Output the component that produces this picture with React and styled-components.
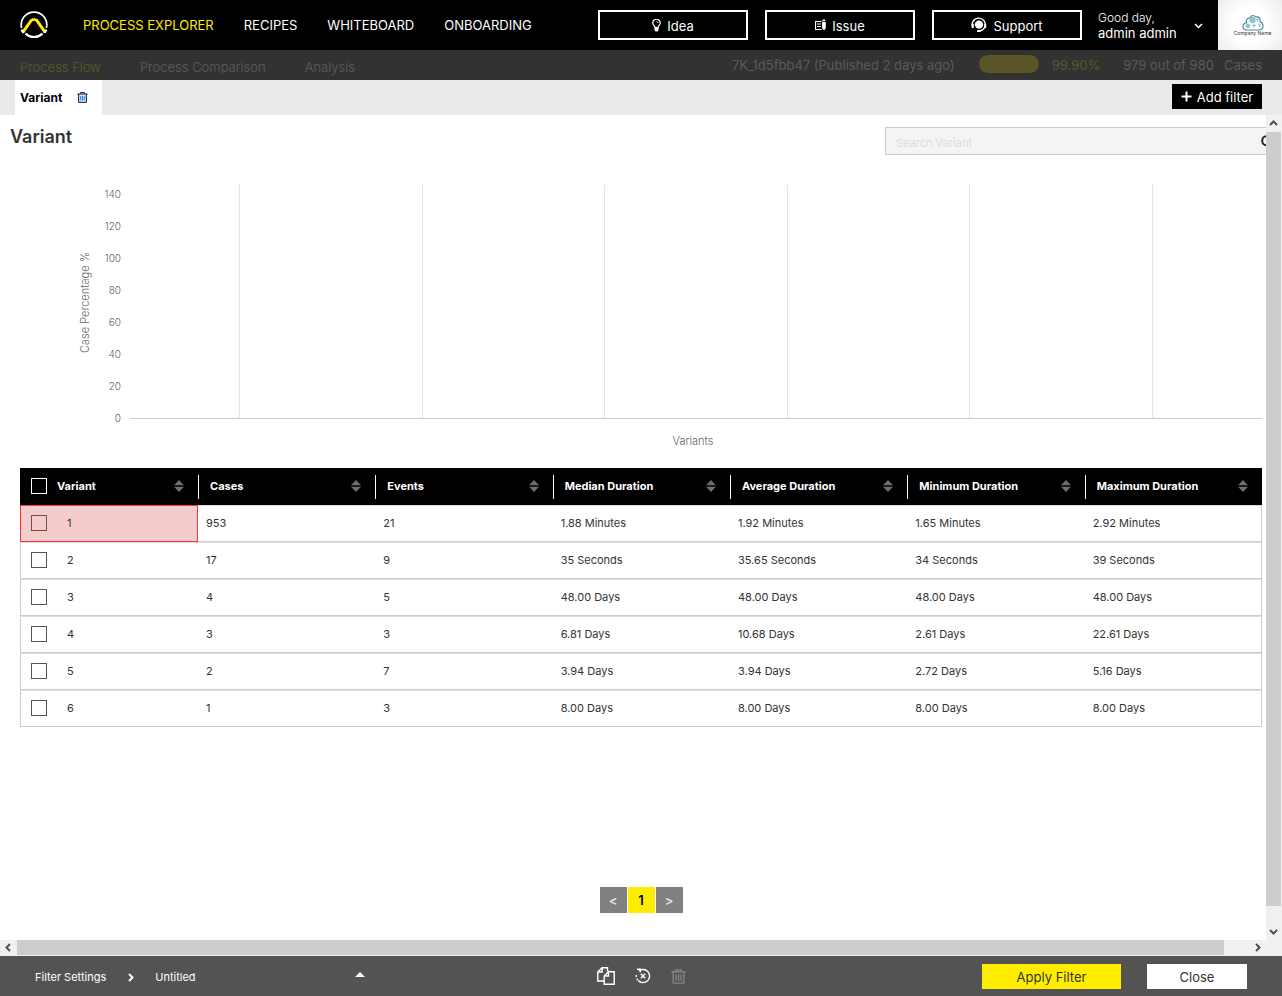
import React from "react";
import styled, { createGlobalStyle } from "styled-components";

const GlobalStyle = createGlobalStyle`
  *, *::before, *::after { box-sizing: border-box; }
  body { margin: 0; background: #fff; color: #333; font-family: Inter, "Liberation Sans", sans-serif; font-size: 12px; }
  button, input, select { font: inherit; color: inherit; margin: 0; padding: 0; border: 0; border-radius: 0; background: none; }
  button { cursor: pointer; }
  a { color: inherit; text-decoration: none; }
  svg { display: block; flex: none; }
`;

const Page = styled.div`
  display: flex;
  flex-direction: column;
  min-height: 100vh;
`;

/* Top bar */
const TopBar = styled.header`
  display: flex;
  align-items: center;
  height: 50px;
  padding-left: 19px;
  background: #000;
  color: #fff;
`;
const MainNav = styled.nav`
  display: flex;
  gap: 30px;
  margin-left: 34px;
  flex: 1;
  font-size: 13px;
  white-space: nowrap;
`;
const NavLink = styled.a`
  color: ${(p) => (p.$active ? "#ffed00" : "#fff")};
`;
const Actions = styled.div`
  display: flex;
  gap: 17px;
`;
const ActionButton = styled.button`
  display: flex;
  align-items: center;
  justify-content: center;
  gap: 6px;
  width: 150px;
  height: 30px;
  border: 2px solid #fff;
  font-size: 13px;
`;
const ActionText = styled.span`
  padding-top: 2px;
`;
const UserMenu = styled.button`
  display: flex;
  align-items: center;
  justify-content: space-between;
  width: 136px;
  padding: 0 15px 0 16px;
  text-align: left;
  font-size: 13px;
  line-height: 16px;
`;
const Greeting = styled.span`
  display: block;
  font-size: 12px;
  font-weight: 300;
  line-height: 15px;
`;
const Company = styled.div`
  display: flex;
  flex-direction: column;
  align-items: center;
  width: 64px;
  height: 50px;
  padding: 14px 0 0 5px;
  background: radial-gradient(circle, #fff 45%, #ececec 100%);
  color: #333;
  font-size: 5px;
  line-height: 5px;
  white-space: nowrap;
`;

/* Process bar, dimmed while the filter panel is open */
const SubBar = styled.div`
  display: flex;
  align-items: center;
  justify-content: space-between;
  height: 30px;
  padding: 0 20px;
  background: #323232;
  color: #5a5a5a;
  font-size: 13px;
  white-space: nowrap;
`;
const SubNav = styled.nav`
  display: flex;
  gap: 39px;
  padding-top: 4px;
  font-weight: 300;
`;
const SubLink = styled.a`
  color: ${(p) => (p.$active ? "#5f5a28" : "#5e5e5e")};
`;
const Status = styled.div`
  display: flex;
  align-items: center;
`;
const Meter = styled.div`
  width: 60px;
  height: 18px;
  margin: -2px 13px 0 24px;
  border-radius: 9px;
  background: #5b5628;
`;
const Percent = styled.span`
  margin-right: 23px;
  color: #5b5628;
`;
const CaseCount = styled.span`
  margin-right: 10px;
`;

/* Filter tabs */
const TabBar = styled.div`
  display: flex;
  justify-content: space-between;
  height: 35px;
  padding: 0 20px 0 15px;
  background: #eaeaec;
`;
const Tab = styled.div`
  display: flex;
  align-items: center;
  justify-content: space-between;
  width: 87px;
  padding: 0 14px 0 5px;
  background: #fff;
  color: #000;
  font-weight: 700;
`;
const IconButton = styled.button`
  display: grid;
  place-items: center;
`;
const AddFilter = styled.button`
  display: flex;
  align-items: center;
  justify-content: center;
  gap: 5px;
  width: 90px;
  height: 25px;
  margin-top: 4px;
  background: #000;
  color: #fff;
  font-size: 13px;
`;

/* Scrollable panel */
const Panel = styled.div`
  flex: 1;
  display: grid;
  grid-template-columns: minmax(0, 1fr) 16px;
  grid-template-rows: 1fr 16px;
  background: #f0f0f0;
`;
const Content = styled.main`
  display: flex;
  flex-direction: column;
  overflow: hidden;
  padding: 0 4px 27px 20px;
  background: #fff;
`;
const Heading = styled.div`
  display: flex;
  justify-content: space-between;
  margin: 0 -10px;
`;
const Title = styled.h1`
  margin: 11px 0 0;
  font-size: 18px;
  line-height: 22px;
  font-weight: 600;
`;
const SearchBox = styled.label`
  display: flex;
  align-items: center;
  width: 389px;
  height: 28px;
  margin: 12px -2px 0 0;
  padding: 0 0 0 10px;
  border: 1px solid #ccc;
  background: #f4f4f4;
`;
const SearchInput = styled.input`
  flex: 1;
  min-width: 0;
  padding-top: 3px;
  outline: 0;
  font-size: 11px;
  &::placeholder { color: #dcdcdc; opacity: 1; }
`;

const Chart = styled.section`
  display: grid;
  grid-template-columns: 24px 29px minmax(0, 1fr);
  margin: 30px 0 19px 57px;
  color: #666;
  font-size: 11px;
  font-weight: 300;
`;
const AxisTitle = styled.div`
  writing-mode: vertical-rl;
  transform: rotate(180deg);
  text-align: center;
  line-height: 16px;
  width: 16px;
`;
const Ticks = styled.div`
  display: flex;
  flex-direction: column;
  justify-content: space-between;
  text-align: right;
  font-size: 10px;
  line-height: 16px;
  padding: 1px 9px 0 0;
  margin-bottom: -6px;
`;
const Plot = styled.svg`
  width: 100%;
  height: 235px;
  overflow: visible;
`;
const XTitle = styled.div`
  grid-column: 3;
  padding: 13px 6px 0 0;
  text-align: center;
  line-height: 16px;
`;

/* Variants table */
const Table = styled.table`
  width: 100%;
  table-layout: fixed;
  border-collapse: separate;
  border-spacing: 0;
`;
const HeadCell = styled.th`
  height: 37px;
  padding: 0;
  background: #000;
  color: #fff;
  font-size: 11px;
  font-weight: 700;
  text-align: left;
  &:first-child { width: 178px; }
`;
const HeadInner = styled.div`
  display: flex;
  align-items: center;
  justify-content: space-between;
  height: 24px;
  padding: 0 14px 2px 11px;
  border-left: ${(p) => (p.$first ? "0" : "1px solid #fff")};
`;
const CheckLabel = styled.label`
  display: flex;
  align-items: center;
  gap: ${(p) => p.$gap}px;
`;
const Check = styled.input`
  appearance: none;
  width: 16px;
  height: 16px;
  border: 1px solid ${(p) => (p.$light ? "#fff" : "#555")};
  ${(p) => p.$marked && "border-color: #7d4a4a;"}
`;
const Cell = styled.td`
  height: 37px;
  padding: 0 0 1px 8px;
  border-top: 1px solid #ddd;
  border-bottom: 1px solid #ccc;
  font-size: 11px;
  &:first-child { padding-left: 10px; border-left: 1px solid #ccc; }
  &:last-child { border-right: 1px solid #ccc; }
  ${(p) => p.$marked && "background: #f4cccc; && { border: 1px solid #f33; }"}
`;

const Pager = styled.nav`
  display: flex;
  justify-content: center;
  gap: 1px;
  margin-top: auto;
  padding-top: 20px;
`;
const PageButton = styled.button`
  width: 27px;
  height: 26px;
  background: ${(p) => (p.$current ? "#ffed00" : "#808080")};
  color: ${(p) => (p.$current ? "#000" : "#e4e4e4")};
  font-size: 13px;
  font-weight: 600;
`;

const Track = styled.div`
  display: flex;
  flex-direction: ${(p) => (p.$vertical ? "column" : "row")};
  background: #f0f0f0;
`;
const ScrollArrow = styled.button`
  display: grid;
  place-items: center;
  flex: none;
  width: ${(p) => (p.$vertical ? 15 : 17)}px;
  height: ${(p) => (p.$vertical ? 17 : 15)}px;
`;
const Rail = styled.div`
  flex: 1;
  display: flex;
  flex-direction: inherit;
  padding: ${(p) => (p.$vertical ? "0 1px 0 0" : "0 0 1px")};
`;
const Thumb = styled.div`
  flex: 0 0 ${(p) => p.$size}%;
  background: #cdcdcd;
`;

/* Bottom bar */
const BottomBar = styled.footer`
  display: flex;
  align-items: center;
  height: 40px;
  padding: 0 35px;
  background: #535353;
  color: #fff;
`;
const Side = styled.div`
  flex: 1;
  display: flex;
  align-items: center;
  gap: ${(p) => (p.$end ? 26 : 20)}px;
  justify-content: ${(p) => (p.$end ? "flex-end" : "flex-start")};
  padding-top: ${(p) => (p.$end ? 1 : 2)}px;
`;
const FilterName = styled.label`
  display: flex;
  align-items: center;
  width: 210px;
`;
const FilterSelect = styled.select`
  flex: 1;
  appearance: none;
  outline: 0;
  font-size: 11px;
`;
const FooterLabel = styled.span`
  font-size: 11px;
`;
const Tools = styled.div`
  display: flex;
  align-items: center;
  gap: 20px;
`;
const FooterButton = styled.button`
  width: ${(p) => (p.$primary ? 139 : 100)}px;
  height: 25px;
  background: ${(p) => (p.$primary ? "#ffed00" : "#fff")};
  color: #333;
  font-size: 13px;
`;

const Logo = () => (
  <svg width="30" height="30" viewBox="0 0 30 30" fill="none">
    <path d="M2.6 18A12.8 12.8 0 1 1 27.4 18" stroke="#fff" strokeWidth="1.7" />
    <path d="M6.4 23.6A12.6 12.6 0 0 0 23.6 23.6" stroke="#fff" strokeWidth="2.2" />
    <path d="M3.8 22.4L12.2 10.4Q15 8 17.8 10.4L26.2 22.4" stroke="#ffed00" strokeWidth="3" />
    <path d="M2.4 19.6L4.6 22.8M27.6 19.6L25.4 22.8" stroke="#fff" strokeWidth="2.2" />
    <path d="M12 8.8Q15 7.4 18 8.8" stroke="#000" strokeWidth="1" strokeDasharray="1 1" />
  </svg>
);
const BulbIcon = () => (
  <svg width="9" height="13" viewBox="0 0 9 13">
    <path d="M3 8.5Q2.8 7.3 1.7 6.2A3.6 3.6 0 1 1 7.3 6.2Q6.2 7.3 6 8.5Z" fill="none" stroke="#fff" strokeWidth="1.2" />
    <path d="M2.4 8H6.6V11L5.5 12.5H3.5L2.4 11Z" fill="#fff" />
    <path d="M4.5 2.4Q6 2.5 6.1 4" fill="none" stroke="#fff" strokeWidth=".8" />
  </svg>
);
const IssueIcon = () => (
  <svg width="11" height="12" viewBox="0 0 11 12">
    <path d="M6.5 2.5H.5V10.5H6.5M2 5H6M2 7.5H6" fill="none" stroke="#fff" strokeWidth="1.2" />
    <path d="M7 3H10.8V9L9 11.5L7 9ZM7.6 .6H10.2V2.2H7.2Z" fill="#fff" />
  </svg>
);
const SupportIcon = () => (
  <svg width="16" height="16" viewBox="0 0 16 16">
    <circle cx="8" cy="7.6" r="4.2" fill="#fff" />
    <path d="M2 11A6.6 6.6 0 1 1 14 9.8Q12.4 13.4 8.7 14" fill="none" stroke="#fff" strokeWidth="1.4" />
    <path d="M.8 6.8H2.8V11H.8ZM13.2 6.8H15.2V11H13.2ZM6 13H9.5V15H6Z" fill="#fff" />
  </svg>
);
const CloudIcon = () => (
  <svg width="22" height="17" viewBox="0 0 22 17">
    <path d="M5 16Q1 16 1 12.5Q1 9 4.5 9Q3.4 4.5 7.5 4.2Q10 -.5 14 3Q19 2.5 18 7.8Q21 8.5 21 12Q21 16 17 16Z" fill="#fff" stroke="#55849a" strokeWidth="1.2" />
    <circle cx="10.5" cy="6" r="3.2" fill="#8cc8d2" />
    <circle cx="5.8" cy="11.8" r="2.4" fill="#8cc8d2" />
    <path d="M14 5.5H17M15.5 4V8M10 11.5H14M12 9.5V13.5M16 11H19M17.5 9.5V13" stroke="#8cc8d2" strokeWidth="1.2" />
  </svg>
);
const TrashIcon = ({ size = 11, color = "#101c3c", bars = "#2f7fe0", fill = "#cfe4fb" }) => (
  <svg width={size} height={size} viewBox="0 0 11 11" fill="none">
    <path d="M1.6 2H9.4V10.4H1.6Z" fill={fill} />
    <path d="M.3 2H10.7M3.5 1.8V.6H7.5V1.8M1.6 2V10.4H9.4V2" stroke={color} />
    <path d="M3.7 4V8.6M5.5 4V8.6M7.3 4V8.6" stroke={bars} />
  </svg>
);
const PlusIcon = () => (
  <svg width="11" height="11" viewBox="0 0 11 11">
    <path d="M5.5 .5V10.5M.5 5.5H10.5" stroke="#fff" strokeWidth="2" />
  </svg>
);
const SearchIcon = () => (
  <svg width="13" height="13" viewBox="0 0 13 13" fill="none" stroke="#222" strokeWidth="2">
    <circle cx="6.8" cy="5.8" r="4.6" />
    <path d="M10 9L13 12" />
  </svg>
);
const SortIcon = () => (
  <svg width="10" height="12" viewBox="0 0 10 12" fill="#6e6e6e">
    <path d="M0 5.2L5 0L10 5.2ZM0 6.8L5 12L10 6.8Z" />
  </svg>
);
const chevrons = {
  up: "M1 6L4.5 2.5L8 6",
  down: "M1 3L4.5 6.5L8 3",
  left: "M6 1L2.5 4.5L6 8",
  right: "M3 1L6.5 4.5L3 8",
};
const Chevron = ({ to, color = "#505050", weight = 2 }) => (
  <svg width="9" height="9" viewBox="0 0 9 9" fill="none" stroke={color} strokeWidth={weight}>
    <path d={chevrons[to]} />
  </svg>
);
const CopyIcon = () => (
  <svg width="18" height="18" viewBox="0 0 18 18" fill="none" stroke="#fff" strokeWidth="1.4">
    <path d="M7 14H.8V5L5 .8H10.5V4.5M5.2 1V5H1" />
    <path d="M11.5 4.7H17.2V17.2H7.2V9L11.5 4.7V9H7.2" />
  </svg>
);
const ResetIcon = () => (
  <svg width="16" height="16" viewBox="0 0 16 16" fill="none" stroke="#fff" strokeWidth="1.4">
    <path d="M4 2.8A6.6 6.6 0 1 1 3.2 12.6" />
    <path d="M2 1.2H5.2V4.2M1.2 7V9M1.8 10.6L2.8 12.2" />
    <path d="M5.8 5.8L10.2 10.2M10.2 5.8L5.8 10.2" />
  </svg>
);

const columns = ["Variant", "Cases", "Events", "Median Duration", "Average Duration", "Minimum Duration", "Maximum Duration"];
const rows = [
  ["1", "953", "21", "1.88 Minutes", "1.92 Minutes", "1.65 Minutes", "2.92 Minutes"],
  ["2", "17", "9", "35 Seconds", "35.65 Seconds", "34 Seconds", "39 Seconds"],
  ["3", "4", "5", "48.00 Days", "48.00 Days", "48.00 Days", "48.00 Days"],
  ["4", "3", "3", "6.81 Days", "10.68 Days", "2.61 Days", "22.61 Days"],
  ["5", "2", "7", "3.94 Days", "3.94 Days", "2.72 Days", "5.16 Days"],
  ["6", "1", "3", "8.00 Days", "8.00 Days", "8.00 Days", "8.00 Days"],
];
const ticks = [140, 120, 100, 80, 60, 40, 20, 0];
const gridLines = [9.67, 25.8, 41.93, 58.06, 74.19, 90.32];

function Scrollbar({ vertical, size }) {
  return (
    <Track $vertical={vertical}>
      <ScrollArrow $vertical={vertical} aria-label={vertical ? "Scroll up" : "Scroll left"}>
        <Chevron to={vertical ? "up" : "left"} />
      </ScrollArrow>
      <Rail $vertical={vertical}>
        <Thumb $size={size} />
      </Rail>
      <ScrollArrow $vertical={vertical} aria-label={vertical ? "Scroll down" : "Scroll right"}>
        <Chevron to={vertical ? "down" : "right"} />
      </ScrollArrow>
    </Track>
  );
}

export default function App() {
  return (
    <Page>
      <GlobalStyle />
      <TopBar>
        <Logo />
        <MainNav>
          <NavLink href="#explorer" $active>PROCESS EXPLORER</NavLink>
          <NavLink href="#recipes">RECIPES</NavLink>
          <NavLink href="#whiteboard">WHITEBOARD</NavLink>
          <NavLink href="#onboarding">ONBOARDING</NavLink>
        </MainNav>
        <Actions>
          <ActionButton><BulbIcon /><ActionText>Idea</ActionText></ActionButton>
          <ActionButton><IssueIcon /><ActionText>Issue</ActionText></ActionButton>
          <ActionButton><SupportIcon /><ActionText>Support</ActionText></ActionButton>
        </Actions>
        <UserMenu>
          <span><Greeting>Good day,</Greeting>admin admin</span>
          <Chevron to="down" color="#fff" weight={1.5} />
        </UserMenu>
        <Company><CloudIcon />Company Name</Company>
      </TopBar>

      <SubBar>
        <SubNav>
          <SubLink href="#flow" $active>Process Flow</SubLink>
          <SubLink href="#comparison">Process Comparison</SubLink>
          <SubLink href="#analysis">Analysis</SubLink>
        </SubNav>
        <Status>
          <span>7K_1d5fbb47 (Published 2 days ago)</span>
          <Meter />
          <Percent>99.90%</Percent>
          <CaseCount>979 out of 980</CaseCount>
          <span>Cases</span>
        </Status>
      </SubBar>

      <TabBar>
        <Tab>
          Variant
          <IconButton aria-label="Remove filter"><TrashIcon /></IconButton>
        </Tab>
        <AddFilter><PlusIcon />Add filter</AddFilter>
      </TabBar>

      <Panel>
        <Content>
          <Heading>
            <Title>Variant</Title>
            <SearchBox>
              <SearchInput type="text" placeholder="Search Variant" aria-label="Search Variant" />
              <SearchIcon />
            </SearchBox>
          </Heading>

          <Chart>
            <AxisTitle>Case Percentage %</AxisTitle>
            <Ticks>{ticks.map((t) => <span key={t}>{t}</span>)}</Ticks>
            <Plot>
              {gridLines.map((x) => (
                <line key={x} x1={`${x}%`} x2={`${x}%`} y1="0" y2="233" stroke="#e6e6e6" shapeRendering="crispEdges" />
              ))}
              <line x1="0" x2="100%" y1="233.5" y2="233.5" stroke="#ccc" />
            </Plot>
            <XTitle>Variants</XTitle>
          </Chart>

          <Table>
            <thead>
              <tr>
                {columns.map((name, i) => (
                  <HeadCell key={name}>
                    <HeadInner $first={i === 0}>
                      {i === 0 ? <CheckLabel $gap={10}><Check type="checkbox" $light />{name}</CheckLabel> : name}
                      <SortIcon />
                    </HeadInner>
                  </HeadCell>
                ))}
              </tr>
            </thead>
            <tbody>
              {rows.map((row, r) => (
                <tr key={row[0]}>
                  {row.map((value, i) => (
                    <Cell key={columns[i]} $marked={r === 0 && i === 0}>
                      {i === 0 ? <CheckLabel $gap={20}><Check type="checkbox" $marked={r === 0} />{value}</CheckLabel> : value}
                    </Cell>
                  ))}
                </tr>
              ))}
            </tbody>
          </Table>

          <Pager aria-label="Pages">
            <PageButton aria-label="Previous page">&lt;</PageButton>
            <PageButton $current>1</PageButton>
            <PageButton aria-label="Next page">&gt;</PageButton>
          </Pager>
        </Content>
        <Scrollbar vertical size={97.8} />
        <Scrollbar size={98} />
      </Panel>

      <BottomBar>
        <Side>
          <FooterLabel>Filter Settings</FooterLabel>
          <Chevron to="right" color="#fff" />
          <FilterName>
            <FilterSelect aria-label="Saved filter"><option>Untitled</option></FilterSelect>
            <svg width="10" height="10" viewBox="0 0 10 10"><path d="M0 5L5 0L10 5Z" fill="#fff" /></svg>
          </FilterName>
        </Side>
        <Tools>
          <IconButton aria-label="Copy filter"><CopyIcon /></IconButton>
          <IconButton aria-label="Reset filter"><ResetIcon /></IconButton>
          <IconButton aria-label="Delete filter"><TrashIcon size={15} color="#858585" bars="#858585" fill="none" /></IconButton>
        </Tools>
        <Side $end>
          <FooterButton $primary>Apply Filter</FooterButton>
          <FooterButton>Close</FooterButton>
        </Side>
      </BottomBar>
    </Page>
  );
}
